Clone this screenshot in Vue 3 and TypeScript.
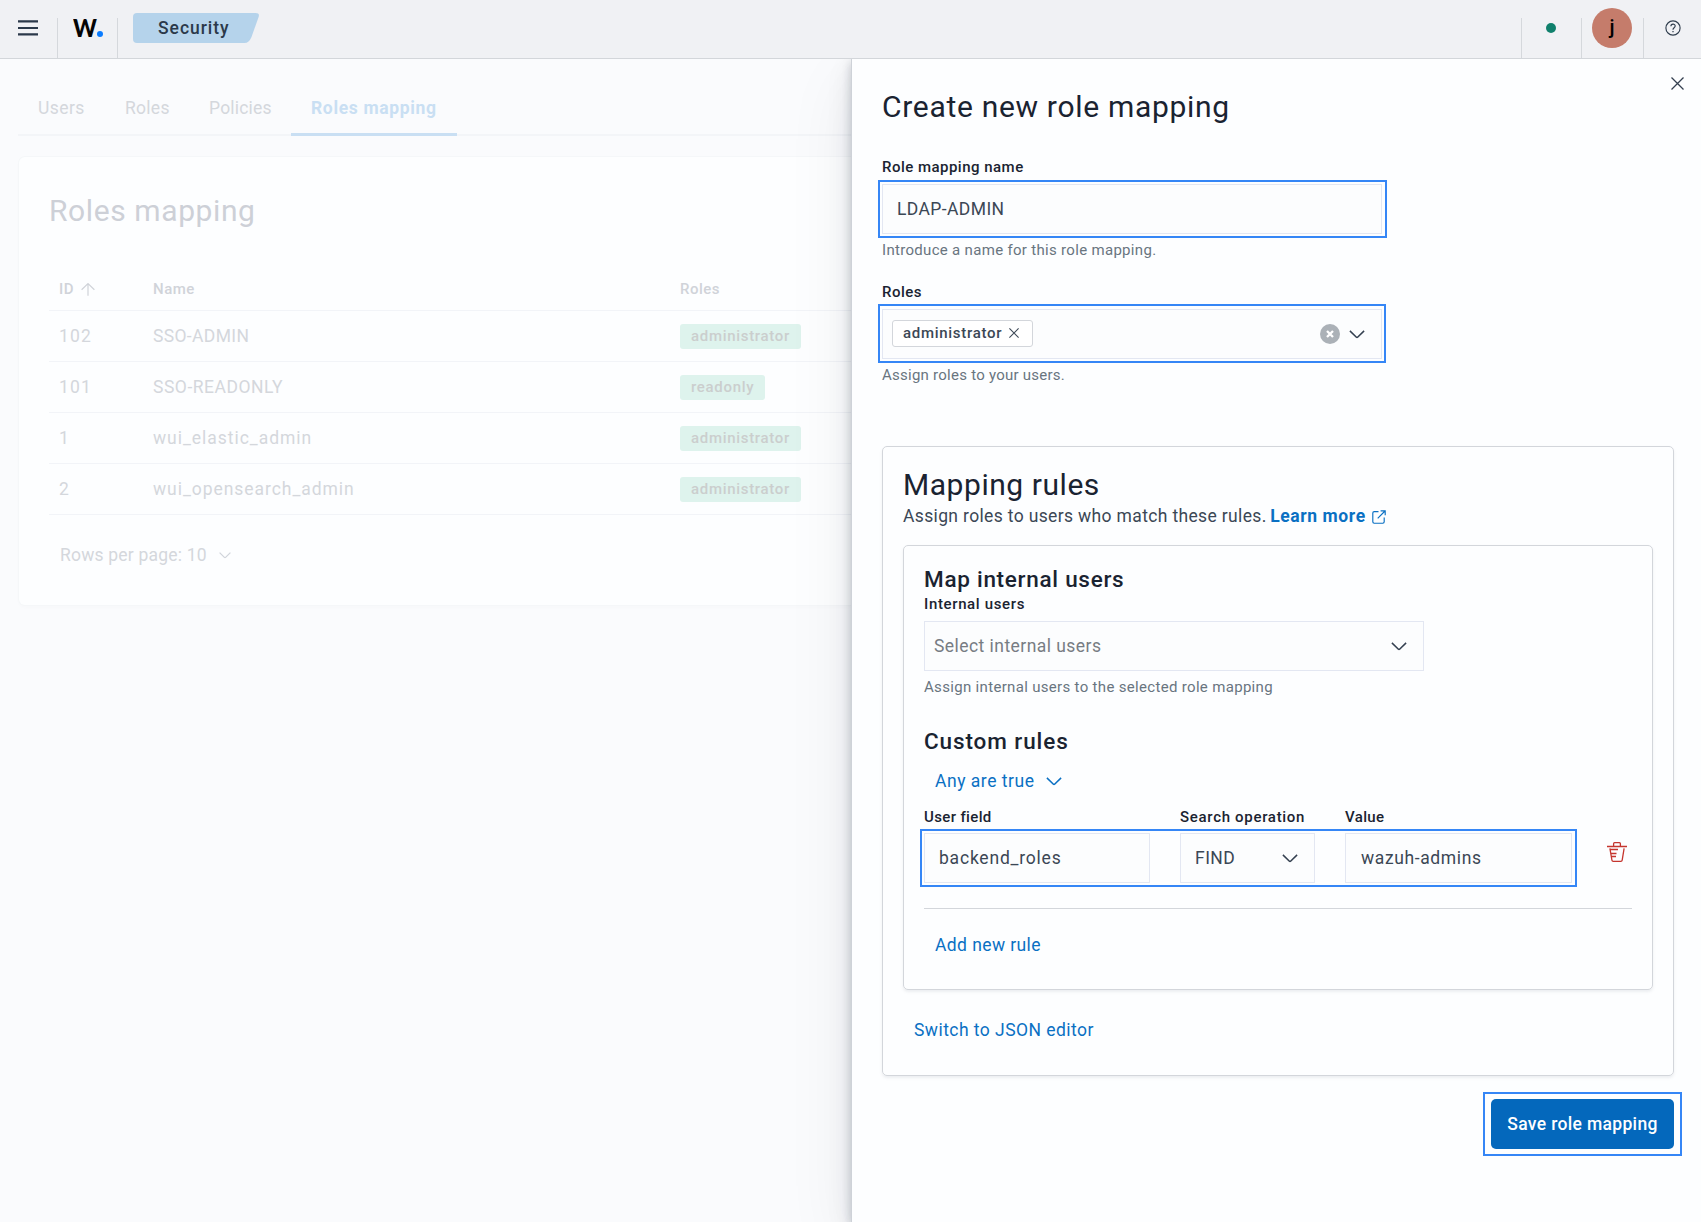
<script setup lang="ts">
interface Mapping {
  id: string
  name: string
  role: string
  idTracking: number
  nameTracking: number
}

const mappings: Mapping[] = [
  { id: '102', name: 'SSO-ADMIN', role: 'administrator', idTracking: 1.16, nameTracking: 0.35 },
  { id: '101', name: 'SSO-READONLY', role: 'readonly', idTracking: 1.16, nameTracking: 0.53 },
  { id: '1', name: 'wui_elastic_admin', role: 'administrator', idTracking: 0, nameTracking: 0.97 },
  { id: '2', name: 'wui_opensearch_admin', role: 'administrator', idTracking: 0, nameTracking: 0.95 },
]
</script>

<template>
  <div class="app">
    <header class="header">
      <div class="cell menu">
        <svg width="20" height="16" viewBox="0 0 20 16"><path d="M0 1.300h20M0 8h20M0 14.300h20" stroke="#2b394a" stroke-width="2.200" /></svg>
      </div>
      <div class="cell logo"><span class="logo-w">W</span><i class="logo-dot"></i></div>
      <div class="crumb">
        <svg width="126" height="30" viewBox="0 0 126 30"><path d="M4 0H122.500Q127 0 125.600 4L118.500 24Q116 30 111.500 30H4Q0 30 0 26V4Q0 0 4 0Z" fill="#b5d3eb" /></svg>
        <span>Security</span>
      </div>
      <div class="spacer"></div>
      <div class="cell health"><i></i></div>
      <div class="cell user"><b>j</b></div>
      <div class="cell help">
        <svg width="16" height="16" viewBox="0 0 16 16" fill="none" stroke="#2f3d4d" stroke-width="1.150"><circle cx="8" cy="8" r="7.100" /><path d="M5.900 6.300C5.900 3.500 10.200 3.500 10.200 6.100C10.200 7.900 8 7.700 8 9.700" /><circle cx="8" cy="11.700" r=".45" fill="#2f3d4d" stroke-width=".6" /></svg>
      </div>
    </header>

    <div class="body">
      <main class="page">
        <nav class="tabs">
          <a class="t-users">Users</a>
          <a class="t-roles">Roles</a>
          <a class="t-policies">Policies</a>
          <a class="active">Roles mapping</a>
        </nav>
        <section class="card">
          <h2>Roles mapping</h2>
          <div class="row head">
            <span class="c-id">ID
              <svg width="14" height="13" viewBox="0 0 14 13" fill="none" stroke="#d0d3d9" stroke-width="1.200"><path d="M7 12.800V.8M.6 6.800L7 .6l6.400 6.200" /></svg>
            </span>
            <span class="c-name">Name</span>
            <span>Roles</span>
          </div>
          <div v-for="m in mappings" :key="m.id" class="row">
            <span class="c-id" :style="{ letterSpacing: m.idTracking + 'px' }">{{ m.id }}</span>
            <span class="c-name" :style="{ letterSpacing: m.nameTracking + 'px' }">{{ m.name }}</span>
            <span class="badge">{{ m.role }}</span>
          </div>
          <div class="pager">
            <span>Rows per page: 10</span>
            <svg width="12" height="7" viewBox="0 0 12 7" fill="none" stroke="#d0d4da" stroke-width="1.200"><path d="M.6.6L5.400 5.400Q6 5.900 6.600 5.400L11.400.6" /></svg>
          </div>
        </section>
      </main>

      <aside class="flyout">
        <svg class="close" width="13" height="13" viewBox="0 0 13 13" stroke="#344050" stroke-width="1.300"><path d="M.5.5l12 12M12.500.5l-12 12" /></svg>
        <h1>Create new role mapping</h1>

        <label class="lbl name-lbl">Role mapping name</label>
        <div class="focus name-focus"><div class="field name-field">LDAP-ADMIN</div></div>
        <p class="hint name-hint">Introduce a name for this role mapping.</p>

        <label class="lbl roles-lbl">Roles</label>
        <div class="focus roles-focus">
          <div class="field combo">
            <span class="pill">administrator
              <svg width="10" height="10" viewBox="0 0 10 10" stroke="#3d4856" stroke-width="1.100"><path d="M.4.4l9.200 9.200M9.600.4L.4 9.600" /></svg>
            </span>
            <svg class="clear" width="20" height="20" viewBox="0 0 20 20"><circle cx="10" cy="10" r="10" fill="#abb1b7" /><path d="M7 7l6 6M13 7l-6 6" stroke="#fff" stroke-width="2.300" /></svg>
            <svg class="chev" width="16" height="9" viewBox="0 0 16 9"><path d="M.9.9L7.400 7.200Q8 7.700 8.600 7.200L15.100.9" /></svg>
          </div>
        </div>
        <p class="hint roles-hint">Assign roles to your users.</p>

        <section class="panel outer">
          <h2>Mapping rules</h2>
          <p class="desc">
            <span>Assign roles to users who match these rules.</span>
            <a>Learn more</a>
            <svg width="14" height="14" viewBox="0 0 14 14" fill="none" stroke="#0a70c3" stroke-width="1.150"><path d="M6.500 1.600H2.200Q.8 1.600.8 3V11.800Q.8 13.200 2.200 13.200H10.800Q12.200 13.200 12.200 11.800V7.500M8.600.8H13.200V5.200M13 1L5.700 8.300" /></svg>
          </p>

          <section class="panel inner">
            <h3 class="map-title">Map internal users</h3>
            <label class="lbl internal-lbl">Internal users</label>
            <div class="field select">
              <span>Select internal users</span>
              <svg class="chev" width="16" height="9" viewBox="0 0 16 9"><path d="M.9.9L7.400 7.200Q8 7.700 8.600 7.200L15.100.9" /></svg>
            </div>
            <p class="hint internal-hint">Assign internal users to the selected role mapping</p>

            <h3 class="custom-title">Custom rules</h3>
            <div class="link any">
              <span>Any are true</span>
              <svg class="chev" width="16" height="9" viewBox="0 0 16 9"><path d="M.9.9L7.400 7.200Q8 7.700 8.600 7.200L15.100.9" /></svg>
            </div>
            <div class="labels">
              <label class="lbl l-field">User field</label>
              <label class="lbl l-op">Search operation</label>
              <label class="lbl l-value">Value</label>
            </div>
            <div class="rule">
              <div class="focus rule-focus">
                <div class="field f-field">backend_roles</div>
                <div class="field f-op">
                  <span>FIND</span>
                  <svg class="chev" width="16" height="9" viewBox="0 0 16 9"><path d="M.9.9L7.400 7.200Q8 7.700 8.600 7.200L15.100.9" /></svg>
                </div>
                <div class="field f-value">wazuh-admins</div>
              </div>
              <svg class="trash" width="20" height="20" viewBox="0 0 20 20" fill="none" stroke="#c5352e" stroke-width="1.300"><path d="M0 4.500H20M6.600 4.300V1.700Q6.600.7 7.600.7H12.400Q13.400.7 13.400 1.700V4.300M2.900 6.400L4.900 18.200Q5.100 19.300 6.200 19.300H13.900Q15 19.300 15.200 18.200L17.100 6.400M3.200 7.500H11M3.800 11.500H9.500M4.500 14.500H9" /></svg>
            </div>
            <hr />
            <div class="link add">Add new rule</div>
          </section>

          <div class="link switch">Switch to JSON editor</div>
        </section>

        <div class="save-focus"><button>Save role mapping</button></div>
      </aside>
    </div>
  </div>
</template>

<style>
body { overflow: hidden; background: #fafbfd; }
</style>

<style scoped>
* { box-sizing: border-box; }
.app { width: 1701px; height: 1222px; display: flex; flex-direction: column; font-family: Roboto, "Liberation Sans", sans-serif; font-size: 17.5px; line-height: 24px; color: #3b4755; overflow: hidden; }
h1, h2, h3, p { margin: 0; font-weight: 400; }
svg { display: block; flex: none; }
span, a, label, button, p, h1, h2, h3 { white-space: nowrap; }

.header { position: relative; z-index: 2; height: 59px; flex: none; display: flex; align-items: flex-start; background: #f0f1f4; border-bottom: 1px solid #d3d6da; }
.cell { height: 58px; display: flex; position: relative; }
.menu { width: 57px; padding: 20px 0 0 18px; }
.logo { width: 61px; padding-left: 16px; }
.menu::after, .logo::after, .health::before, .user::before, .help::before { content: ""; position: absolute; top: 18px; bottom: 0; width: 1px; background: #d5d8dc; }
.menu::after { right: -1px; }
.logo::after { right: 0; }
.logo-w { font-family: Lato, sans-serif; font-weight: 900; font-size: 24px; line-height: 30px; padding-top: 13px; color: #050505; transform: scaleX(.94); transform-origin: 0 0; }
.logo-dot { position: absolute; left: 40px; top: 31px; width: 6px; height: 6px; border-radius: 50%; background: #0a7cff; }
.crumb { position: relative; width: 126px; height: 30px; margin: 13px 0 0 15px; }
.crumb span { position: absolute; left: 25px; top: 3px; font-weight: 500; letter-spacing: .96px; color: #2b394a; }
.spacer { flex: 1; }
.health { width: 60px; }
.user { width: 62px; }
.help { width: 58px; padding: 20px 0 0 22px; }
.health::before, .user::before, .help::before { left: 0; }
.health i { width: 10px; height: 10px; border-radius: 50%; background: #10806c; margin: 23px 0 0 25px; }
.user b { width: 40px; height: 40px; border-radius: 50%; background: #c57c6b; margin: 8px 0 0 11px; text-align: center; line-height: 39px; color: #000; font-weight: 500; font-size: 20px; }

.body { flex: 1; display: flex; min-height: 0; }
.page { width: 851px; padding-left: 18px; color: #d4d7dc; background: #fafbfd; }
.tabs { display: flex; height: 77px; padding-left: 20px; background: linear-gradient(#f3f5f8, #f3f5f8) 0 75px / 100% 2px no-repeat; }
.tabs a { padding-top: 37px; }
.t-users { width: 87px; letter-spacing: .43px; }
.t-roles { width: 84px; letter-spacing: .28px; }
.t-policies { width: 82px; letter-spacing: .2px; }
.tabs .active { width: 166px; padding-left: 20px; font-weight: 700; letter-spacing: .65px; color: #c9dff3; border-bottom: 3px solid #c9dff3; }
.card { margin: 21px 0 0 1px; height: 448px; padding: 34px 0 0 30px; border-radius: 6px 0 0 6px; background: #fdfeff; box-shadow: 0 0 0 1px #f5f7f9, 0 2px 4px rgba(0, 0, 0, .02); }
.card h2 { font-size: 30px; line-height: 40px; letter-spacing: .6px; color: #cdd0d7; }
.row { height: 51px; display: flex; align-items: center; padding-left: 10px; border-bottom: 1px solid #f2f4f8; }
.row.head { height: 80px; padding-top: 37px; font-size: 15px; font-weight: 500; letter-spacing: .5px; color: #d0d3d9; }
.c-id { width: 94px; display: flex; align-items: center; gap: 7px; }
.c-name { width: 527px; }
.badge { height: 25px; line-height: 24px; padding: 0 11px; border-radius: 3px; background: #def3ed; color: #cbcecd; font-size: 15px; font-weight: 500; letter-spacing: .69px; }
.pager { display: flex; align-items: center; gap: 12px; margin-top: 28px; padding-left: 11px; letter-spacing: .2px; }

.flyout { position: relative; z-index: 1; width: 850px; padding: 28px 0 0 30px; background: #fdfeff; border-left: 1px solid #ced2d8; box-shadow: 0 3px 9px rgba(20, 28, 45, .2), 0 9px 24px rgba(20, 28, 45, .1), 0 22px 66px rgba(20, 28, 45, .07); }
.close { position: absolute; left: 819px; top: 18px; }
h1 { font-size: 30px; line-height: 40px; letter-spacing: .69px; color: #1a2331; }
.lbl { display: block; font-size: 15px; line-height: 20px; font-weight: 500; letter-spacing: .48px; color: #1a2331; }
.name-lbl { margin-top: 30px; }
.focus { border: 2px solid #3586f6; margin-left: -4px; padding: 2px; }
.field { height: 50px; border: 1px solid #e3e7f2; background: #fcfdfe; display: flex; align-items: center; }
.name-focus { width: 509px; height: 58px; margin-top: 3px; }
.name-field { width: 500px; padding-left: 14px; letter-spacing: .4px; }
.hint { font-size: 15px; line-height: 20px; color: #69757f; }
.name-hint { margin-top: 2px; letter-spacing: .31px; }
.roles-lbl { margin-top: 22px; }
.roles-focus { width: 508px; height: 59px; margin-top: 2px; padding-top: 3px; }
.combo { width: 500px; padding-left: 9px; }
.pill { width: 141px; height: 27px; margin-top: -2px; border: 1px solid #d3d6db; border-radius: 3px; display: flex; align-items: center; gap: 7px; padding-left: 10px; background: #fff; font-size: 15px; font-weight: 500; letter-spacing: .71px; }
.clear { margin-left: 287px; }
.chev { fill: none; stroke: #344050; stroke-width: 1.5; }
.combo .chev { margin-left: 9px; }
.roles-hint { margin-top: 2px; letter-spacing: .25px; }

.panel { border: 1px solid #d3d6db; border-radius: 5px; box-shadow: 0 2px 3px rgba(120, 130, 145, .13); }
.outer { width: 792px; height: 630px; margin-top: 61px; padding: 18px 0 0 20px; }
.outer h2 { font-size: 30px; line-height: 40px; letter-spacing: .55px; color: #1a2331; }
.desc { display: flex; margin-top: -1px; letter-spacing: .35px; }
.desc a { margin-left: 3.5px; font-weight: 700; letter-spacing: .6px; color: #0a70c3; }
.desc svg { margin: 6px 0 0 6.5px; }
.inner { width: 750px; height: 445px; margin-top: 17px; padding: 18px 0 0 20px; }
h3 { font-size: 22.5px; line-height: 30px; letter-spacing: .72px; color: #1a2331; }
h3.map-title, h3.custom-title { font-weight: 500; }
.internal-lbl { letter-spacing: .64px; }
.select { width: 500px; margin-top: 7px; padding: 0 16px 0 9px; justify-content: space-between; letter-spacing: .45px; color: #777c83; }
.internal-hint { margin-top: 6px; letter-spacing: .32px; }
.custom-title { margin-top: 29px; letter-spacing: .9px; }
.link { color: #0a70c3; padding-left: 11px; }
.any { display: flex; align-items: center; margin-top: 13px; letter-spacing: .53px; }
.any .chev { stroke: #0a70c3; margin-left: 11px; }
.labels { display: flex; margin-top: 14px; }
.l-field { width: 256px; letter-spacing: .36px; }
.l-op { width: 165px; letter-spacing: .69px; }
.l-value { letter-spacing: .35px; }
.rule { display: flex; margin-top: 2px; }
.rule-focus { width: 657px; height: 58px; display: flex; }
.f-field { width: 226px; padding-left: 14px; letter-spacing: .79px; }
.f-op { width: 135px; margin-left: 30px; padding: 0 16px 0 14px; justify-content: space-between; letter-spacing: .46px; }
.f-value { width: 227px; margin-left: 30px; padding-left: 15px; letter-spacing: .62px; }
.trash { margin: 13px 0 0 30px; }
hr { width: 708px; height: 1px; margin: 21px 0 0; border: 0; background: #d3d6db; }
.add { margin-top: 24px; letter-spacing: .41px; }
.switch { margin-top: 28px; letter-spacing: .45px; }
.save-focus { width: 199px; height: 64px; margin: 16px 0 0 601px; padding: 5px 6px; border: 2px solid #3586f6; }
button { display: block; width: 183px; height: 50px; border: 0; padding: 0; border-radius: 5px; background: #0468bc; color: #fdfeff; font: 500 17.5px Roboto, sans-serif; letter-spacing: .34px; }
</style>
